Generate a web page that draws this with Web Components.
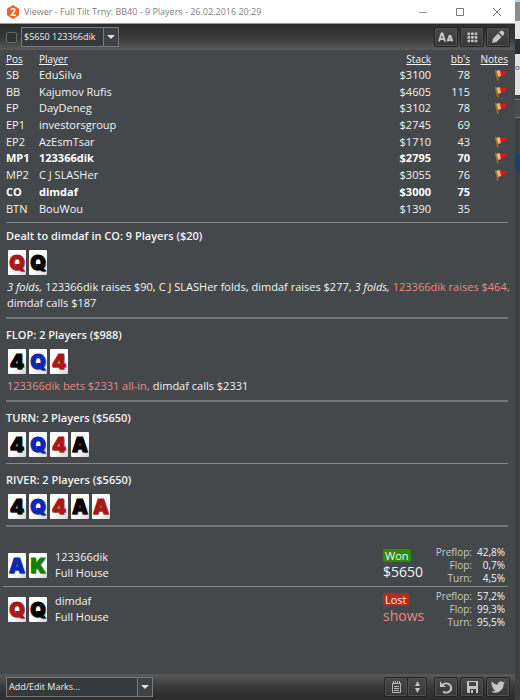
<!DOCTYPE html>
<html lang="en">
<head>
<meta charset="utf-8">
<title>Viewer</title>
<style>
	html, body { height: 100%; margin: 0; }
	body { background: #44484b; font: 11px/16px "Open Sans", "Noto Sans", sans-serif; color: #f4f4f4; overflow: hidden; }
</style>
</head>
<body>
<replay-window></replay-window>

<script>
const ICONS = {
	size: '<svg width="16" height="12" viewBox="0 0 16 12"><path fill="none" stroke="#c4c4c4" stroke-width="2" d="M1 10.500 3.500 2.500h1l2.500 8M2 8h4M9.500 10.500l2-5.500h1l2 5.500M10.500 9h3"/></svg>',
	grid: '<svg width="11" height="11" viewBox="0 0 11 11"><path fill="#c4c4c4" d="M.5.500h2.600v2.600H.5zM4.100.500h2.600v2.600H4.100zM7.700.500h2.600v2.600H7.700zM.5 4.100h2.600v2.600H.5zM4.100 4.100h2.600v2.600H4.100zM7.700 4.100h2.600v2.600H7.700zM.5 7.700h2.600v2.600H.5zM4.100 7.700h2.600v2.600H4.100zM7.700 7.700h2.600v2.600H7.700z"/></svg>',
	pencil: '<svg width="14" height="14" viewBox="0 0 14 14"><path fill="#c4c4c4" d="M1 13 2 8.500 7 3.500 10.500 7 5.500 12zM8 2.500 9.500 1Q11 0 12.500 1.500T13 4.500L11.500 6z"/></svg>',
	note: '<svg width="11" height="13" viewBox="0 0 11 13"><path fill="none" stroke="#b8b8b8" d="M1.500 2v9.500h8V2M1 2.500h9M2.500 0v3M4.500 0v3M6.500 0v3M8.500 0v3M3 5.500h5M3 7.500h5M3 9.500h5"/></svg>',
	spin: '<svg width="7" height="12" viewBox="0 0 7 12"><path fill="#c4c4c4" d="M3.500 0 6 5H1zM3.500 12 1 7h5z"/></svg>',
	undo: '<svg width="14" height="13" viewBox="0 0 14 13"><path fill="none" stroke="#c4c4c4" stroke-width="2" d="M3.500 4A5 4.500 0 1 1 4 10.500"/><path fill="#c4c4c4" d="M1 0v6h6L5 4.500 3 3z"/></svg>',
	save: '<svg width="13" height="12" viewBox="0 0 13 12"><path fill="#c4c4c4" fill-rule="evenodd" d="M1 0h11v12H1zM3 1v4h7V1zM4 8v4h1V9h2v3h3V8z"/></svg>',
	bird: '<svg width="14" height="12" viewBox="0 0 24 20"><path fill="#c4c4c4" d="M24 2.400a10 10 0 0 1-2.800.8A5 5 0 0 0 23.300.500a10 10 0 0 1-3.100 1.200A5 5 0 0 0 11.800 6.200 14 14 0 0 1 1.700 1a5 5 0 0 0 1.500 6.600A5 5 0 0 1 1 7a5 5 0 0 0 4 4.900 5 5 0 0 1-2.300 0 5 5 0 0 0 4.600 3.500A10 10 0 0 1 0 17.500 14 14 0 0 0 21.500 5z"/></svg>',
	flag: '<svg width="14" height="12" viewBox="0 0 14 12"><path fill="#ee1111" d="M5 1Q9 3 13 1.500 12 6 6 7z"/><path fill="#e9b48c" d="M2 2q2-1 4-.5L7 7 4 8z"/><path fill="none" stroke="#a8701d" stroke-width="1.500" d="M1.500 1 4 11.500"/></svg>'
};

const PLAYERS = [
	['SB', 'EduSilva', '$3100', '78', true],
	['BB', 'Kajumov Rufis', '$4605', '115', true],
	['EP', 'DayDeneg', '$3102', '78', true],
	['EP1', 'investorsgroup', '$2745', '69', false],
	['EP2', 'AzEsmTsar', '$1710', '43', true],
	['MP1', '123366dik', '$2795', '70', true, 'hot'],
	['MP2', 'C J SLASHer', '$3055', '76', true],
	['CO', 'dimdaf', '$3000', '75', false, 'hot'],
	['BTN', 'BouWou', '$1390', '35', false]
];

class BaseElement extends HTMLElement {
	constructor() {
		super();
		this.attachShadow({mode:'open'});
	}

	connectedCallback() {
		this.shadowRoot.innerHTML = this.template;
	}
}

class TitleBar extends BaseElement {
	get template() {
		return `
			<style>
			:host { display: flex; align-items: center; height: 23px; padding-left: 6px; background: #fff; color: #808080; border-bottom: 1px solid #9a9a9a; }
			.title { flex: 1; margin-left: 4px; white-space: nowrap; font-size: 9px; }
			svg { display: block; }
			button { width: 37px; height: 22px; padding: 0; border: 0; background: none; display: grid; place-items: center; }
			text { font: bold 10px "Open Sans", sans-serif; }
			</style>
			<svg width="14" height="14" viewBox="0 0 14 14"><path fill="#f26322" d="M7 0 12 3Q13 3.500 13 4.500v5Q13 10.500 12 11L7 14 2 11Q1 10.500 1 9.500v-5Q1 3.500 2 3z"/><text x="7" y="11" text-anchor="middle" fill="#fff">2</text></svg>
			<span class="title"><slot></slot></span>
			<button aria-label="Minimize"><svg width="10" height="10"><path stroke="#999" d="M1 5.500h8"/></svg></button>
			<button aria-label="Maximize"><svg width="10" height="10"><path fill="none" stroke="#777" d="M1.500 1.500h7v7h-7z"/></svg></button>
			<button aria-label="Close"><svg width="10" height="10"><path stroke="#777" d="M1 1l8 8M9 1l-8 8"/></svg></button>
		`;
	}
}

class ToolBar extends BaseElement {
	get template() {
		return `
			<style>
			:host { display: flex; align-items: center; gap: 2px; box-sizing: border-box; height: 26px; padding: 0 5px 0 6px; background: linear-gradient(#2c2c2c, #383838 50%, #585858); }
			:host([flip]) { background: linear-gradient(#5a5a5a, #383838 50%, #2c2c2c); }
			</style>
			<slot></slot>
		`;
	}
}

class ToolButton extends BaseElement {
	get template() {
		return `
			<style>
			:host { display: block; }
			:host([push]) { margin-left: auto; }
			button { display: grid; place-items: center; width: 24px; height: 20px; padding: 0; border: 1px solid #252525; border-radius: 2px; background: linear-gradient(#4a4a4a, #363636); box-shadow: inset 0 0 0 1px #505050; }
			:host([narrow]) button { width: 20px; }
			:host([narrow]) { margin-left: -3px; margin-right: 5px; }
			svg { display: block; }
			</style>
			<button aria-label="${this.getAttribute('label')}">${ICONS[this.getAttribute('icon')]}</button>
		`;
	}
}

class DropDown extends BaseElement {
	get template() {
		return `
			<style>
			:host { display: grid; grid-template-columns: 1fr 15px; height: 20px; box-sizing: border-box; border: 1px solid #777b7d; background: #35393c; }
			:host([short]) { width: 98px; margin-left: 2px; }
			:host([long]) { width: 147px; }
			select { grid-area: 1 / 1 / 2 / 3; appearance: none; min-width: 0; border: 0; padding: 0 15px 0 2px; background: none; color: #f0f0f0; font: 9px/16px "Open Sans", sans-serif; }
			svg { grid-area: 1 / 2; width: 14px; height: 18px; border-left: 1px solid #777b7d; background: #3e4245; pointer-events: none; }
			</style>
			<select aria-label="${this.getAttribute('label')}"><option>${this.getAttribute('value')}</option></select>
			<svg viewBox="0 0 14 18"><path fill="#e0e0e0" d="M3 7h8l-4 4z"/></svg>
		`;
	}
}

class PlayerTable extends BaseElement {
	get rows() {
		return PLAYERS.map(([pos, name, stack, bbs, note, hot = '']) => `
			<tr class="${hot}"><td>${pos}</td><td>${name}</td><td class="num">${stack}</td><td class="num">${bbs}</td><td class="num">${note ? ICONS.flag : ''}</td></tr>`).join('');
	}

	get template() {
		return `
			<style>
			:host { display: block; padding: 2px 0 5px; }
			table { width: 100%; height: 165px; border-collapse: collapse; table-layout: fixed; }
			th, td { padding: 0; text-align: left; line-height: 16px; white-space: nowrap; }
			th { font-size: 10px; line-height: 14px; font-weight: 400; text-decoration: underline; }
			.num { text-align: right; }
			.hot { font-weight: 700; color: #fff; }
			.pos { width: 33px; }
			.stack { width: 50px; }
			.bbs { width: 39px; }
			.notes { width: 38px; }
			svg { display: block; margin-left: auto; }
			</style>
			<table>
				<colgroup><col class="pos"><col><col class="stack"><col class="bbs"><col class="notes"></colgroup>
				<tr><th>Pos</th><th>Player</th><th class="num">Stack</th><th class="num">bb's</th><th class="num">Notes</th></tr>
				${this.rows}
			</table>
		`;
	}
}

// cards="Qr Qk": rank followed by the colour of its suit
class CardRow extends BaseElement {
	get template() {
		const cards = this.getAttribute('cards').split(' ').map(c => `<span class="${c[1]}">${c[0]}</span>`).join('');
		return `
			<style>
			:host { display: flex; gap: 3px; height: 25px; padding-left: 2px; }
			span { width: 18px; height: 25px; background: linear-gradient(135deg, #fff 60%, #d4d4d4); border-radius: 1px; font: 900 20px/26px Inter, sans-serif; -webkit-text-stroke: 1px currentColor; text-shadow: 1px 1px 1px #999; display: flex; justify-content: center; }
			.r { color: #a81818; }
			.k { color: #000; }
			.b { color: #0a28b4; }
			.g { color: #128000; }
			</style>
			${cards}
		`;
	}
}

class HandStreet extends BaseElement {
	get template() {
		return `
			<style>
			:host { display: block; padding: 8px 0 6px; border-top: 1px solid #85888a; }
			:host([first]) { padding-top: 5px; }
			:host([thick]) { border-top: 2px solid #74777a; }
			h2 { margin: 0 0 6px; font-size: 11px; line-height: 16px; font-weight: 600; }
			.actions { display: flex; flex-wrap: wrap; column-gap: 3px; margin: 4px -5px 0 1px; }
			::slotted(b) { font-weight: 400; color: #e88a80; }
			</style>
			<h2>${this.getAttribute('heading')}</h2>
			<card-row cards="${this.getAttribute('cards')}"></card-row>
			${this.children.length ? '<div class="actions"><slot></slot></div>' : ''}
		`;
	}
}

class HandResult extends BaseElement {
	get template() {
		const won = this.hasAttribute('won');
		const odds = this.getAttribute('odds').split(' ');
		return `
			<style>
			:host { display: grid; grid-template-columns: 49px 1fr 51px 71px; align-items: start; padding: 3px 3px 1px; }
			:host([lined]) { border-top: 1px solid #85888a; }
			card-row { margin-top: 7px; }
			.name { padding-top: 3px; }
			.badge { display: block; width: max-content; margin-top: 3px; padding: 0 2px; border-radius: 2px; line-height: 13px; background: ${won ? '#318a0c' : '#b8281c'}; }
			.sum { font-size: 14px; line-height: 20px; color: ${won ? '#f4f4f4' : '#e88a80'}; }
			dl { display: grid; grid-template-columns: 38px 33px; margin: 0; text-align: right; font-size: 10px; line-height: 13px; }
			dt { color: #c8c8c8; }
			dd { margin: 0; }
			</style>
			<card-row cards="${this.getAttribute('cards')}"></card-row>
			<div class="name">${this.getAttribute('player')}<br>Full House</div>
			<div><span class="badge">${won ? 'Won' : 'Lost'}</span><div class="sum"><slot></slot></div></div>
			<dl><dt>Preflop:</dt><dd>${odds[0]}</dd><dt>Flop:</dt><dd>${odds[1]}</dd><dt>Turn:</dt><dd>${odds[2]}</dd></dl>
		`;
	}
}

// sliver of the window that lies behind this one
class BackWindow extends BaseElement {
	get template() {
		return `
			<style>
			:host { display: flex; flex-direction: column; background: #3c4043; overflow: hidden; }
			div { flex: none; }
			.sky { height: 2px; background: #b8d4e8; }
			.grey { height: 19px; background: #8c8c8c; }
			.light { height: 18px; background: #e4e4e4; }
			.dark { height: 15px; background: #2c2f31; }
			.page { height: 41px; background: #e2e2e2; color: #333; font-size: 8px; line-height: 25px; }
			.tool { height: 17px; margin-top: 4px; border: solid #777; border-width: 1px 0; background: #484c4f; }
			.blue { height: 18px; margin-top: 35px; background: #12427e; }
			</style>
			<div class="sky"></div><div class="grey"></div><div class="light"></div><div class="dark"></div>
			<div class="page">or</div><div class="tool"></div><div class="blue"></div>
		`;
	}
}

class ReplayWindow extends BaseElement {
	get template() {
		return `
			<style>
			:host { display: grid; grid-template-columns: 1fr 5px; height: 100%; }
			.window { display: flex; flex-direction: column; min-width: 0; }
			main { flex: 1; }
			.hand { margin: 0 7px 0 6px; border-bottom: 2px solid #74777a; }
			.results { margin: 16px 7px 0 3px; }
			input { appearance: none; width: 11px; height: 11px; margin: 0; border: 1px solid #666a6c; border-radius: 2px; background: #303334; }
			</style>
			<div class="window">
				<title-bar>Viewer - Full Tilt Trny: BB40 - 9 Players - 26.02.2016 20:29</title-bar>
				<tool-bar>
					<input type="checkbox" aria-label="Select hand">
					<drop-down short label="Hand" value="$5650 123366dik"></drop-down>
					<tool-button push icon="size" label="Text size"></tool-button>
					<tool-button icon="grid" label="Grid"></tool-button>
					<tool-button icon="pencil" label="Edit"></tool-button>
				</tool-bar>
				<main>
					<div class="hand">
						<player-table></player-table>
						<hand-street first heading="Dealt to dimdaf in CO: 9 Players ($20)" cards="Qr Qk">
							<i>3 folds,</i>
							<span>123366dik raises $90,</span>
							<span>C J SLASHer folds,</span>
							<span>dimdaf raises $277,</span>
							<i>3 folds,</i>
							<b>123366dik raises $464,</b>
							<span>dimdaf calls $187</span>
						</hand-street>
						<hand-street thick heading="FLOP: 2 Players ($988)" cards="4k Qb 4r">
							<b>123366dik bets $2331 all-in,</b>
							<span>dimdaf calls $2331</span>
						</hand-street>
						<hand-street thick heading="TURN: 2 Players ($5650)" cards="4k Qb 4r Ak"></hand-street>
						<hand-street heading="RIVER: 2 Players ($5650)" cards="4k Qb 4r Ak Ar"></hand-street>
					</div>
					<div class="results">
						<hand-result won player="123366dik" cards="Ab Kg" odds="42,8% 0,7% 4,5%">$5650</hand-result>
						<hand-result lined player="dimdaf" cards="Qr Qk" odds="57,2% 99,3% 95,5%">shows</hand-result>
					</div>
				</main>
				<tool-bar flip>
					<drop-down long label="Marks" value="Add/Edit Marks..."></drop-down>
					<tool-button push icon="note" label="Notes"></tool-button>
					<tool-button narrow icon="spin" label="Choose note"></tool-button>
					<tool-button icon="undo" label="Undo"></tool-button>
					<tool-button icon="save" label="Save"></tool-button>
					<tool-button icon="bird" label="Share"></tool-button>
				</tool-bar>
			</div>
			<back-window aria-hidden="true"></back-window>
		`;
	}
}

customElements.define('title-bar', TitleBar);
customElements.define('tool-bar', ToolBar);
customElements.define('tool-button', ToolButton);
customElements.define('drop-down', DropDown);
customElements.define('player-table', PlayerTable);
customElements.define('card-row', CardRow);
customElements.define('hand-street', HandStreet);
customElements.define('hand-result', HandResult);
customElements.define('back-window', BackWindow);
customElements.define('replay-window', ReplayWindow);
</script>
</body>
</html>
